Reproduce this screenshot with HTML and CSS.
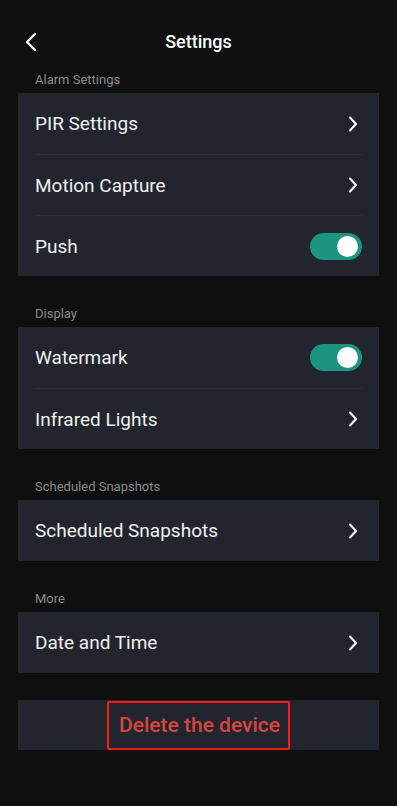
FILE: index.html
```html
<!DOCTYPE html>
<html lang="en">
  <head>
    <meta charset="UTF-8" />
    <meta name="viewport" content="width=device-width, initial-scale=1.0" />
    <title>Settings</title>
    <link rel="stylesheet" href="styles.css">
  </head>
  <body>
    <div class="header">
      <svg class="back" width="14" height="20" viewBox="0 0 14 20">
        <path d="M11 2 L3 10 L11 18" fill="none" stroke="#fff" stroke-width="2.2" stroke-linecap="round" stroke-linejoin="round" />
      </svg>
      <div class="title">Settings</div>
    </div>

    <div class="section-label">Alarm Settings</div>
    <div class="card">
      <div class="row">
        <span>PIR Settings</span>
        <svg class="chevron" width="10" height="16" viewBox="0 0 10 16"><path d="M2 1.5 L8 8 L2 14.5" /></svg>
      </div>
      <div class="row">
        <span>Motion Capture</span>
        <svg class="chevron" width="10" height="16" viewBox="0 0 10 16"><path d="M2 1.5 L8 8 L2 14.5" /></svg>
      </div>
      <div class="row">
        <span>Push</span>
        <div class="toggle on"><div class="knob"></div></div>
      </div>
    </div>

    <div class="section-label">Display</div>
    <div class="card">
      <div class="row">
        <span>Watermark</span>
        <div class="toggle on"><div class="knob"></div></div>
      </div>
      <div class="row">
        <span>Infrared Lights</span>
        <svg class="chevron" width="10" height="16" viewBox="0 0 10 16"><path d="M2 1.5 L8 8 L2 14.5" /></svg>
      </div>
    </div>

    <div class="section-label">Scheduled Snapshots</div>
    <div class="card">
      <div class="row">
        <span>Scheduled Snapshots</span>
        <svg class="chevron" width="10" height="16" viewBox="0 0 10 16"><path d="M2 1.5 L8 8 L2 14.5" /></svg>
      </div>
    </div>

    <div class="section-label">More</div>
    <div class="card">
      <div class="row">
        <span>Date and Time</span>
        <svg class="chevron" width="10" height="16" viewBox="0 0 10 16"><path d="M2 1.5 L8 8 L2 14.5" /></svg>
      </div>
    </div>

    <div class="card delete-card">
      <div class="delete">Delete the device</div>
    </div>
  </body>
</html>
```

FILE: styles.css
```css
*,
*::before,
*::after {
  box-sizing: border-box;
}

body {
  margin: 0;
  background-color: #0f0f0f;
  font-family: Roboto, "Noto Sans", sans-serif;
  color: #f0f0f0;
  min-height: 100vh;
  padding: 0 18px;
}

.header {
  height: 66px;
  padding-top: 18px;
  position: relative;
  text-align: center;
}

.back {
  position: absolute;
  left: 6px;
  top: 32px;
}

.title {
  font-size: 18px;
  font-weight: 500;
  line-height: 48px;
  color: #fff;
}

.section-label {
  height: 27px;
  line-height: 27px;
  padding-left: 17px;
  font-size: 13px;
  color: #8a8a8a;
}

.card + .section-label {
  margin-top: 24px;
}

.card {
  background-color: #22252d;
}

.row {
  height: 61px;
  margin: 0 17px;
  display: flex;
  align-items: center;
  justify-content: space-between;
  font-size: 19px;
}

.row + .row {
  border-top: 1px solid #2b2e36;
}

.chevron {
  margin-right: 4px;
}

.chevron path {
  fill: none;
  stroke: #fff;
  stroke-width: 2;
  stroke-linecap: round;
  stroke-linejoin: round;
}

.toggle {
  width: 52px;
  height: 27px;
  border-radius: 14px;
  background-color: #1c9580;
  display: flex;
  align-items: center;
  justify-content: flex-end;
  padding: 0 4px;
}

.knob {
  width: 21px;
  height: 21px;
  border-radius: 50%;
  background-color: #fff;
}

.delete-card {
  margin-top: 27px;
  height: 50px;
  display: flex;
  justify-content: center;
  align-items: center;
}

.delete {
  border: 2px solid #ff1a1a;
  border-radius: 2px;
  height: 49px;
  padding: 0 8px 0 10px;
  display: flex;
  align-items: center;
  font-size: 21px;
  font-weight: 500;
  color: #d9453e;
}
```
